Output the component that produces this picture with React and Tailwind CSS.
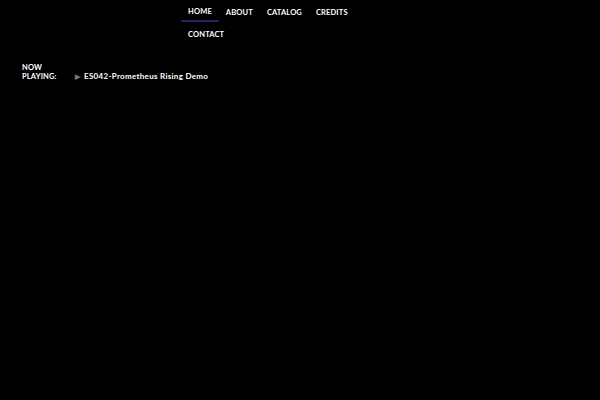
export default function App() {
  const items = ["HOME", "ABOUT", "CATALOG", "CREDITS", "CONTACT"];
  return (
    <div className="w-[600px] h-[400px] bg-black text-white overflow-hidden" style={{ fontFamily: "Lato, 'Liberation Sans', sans-serif" }}>
      <nav className="pl-[181px]">
        <ul className="flex flex-wrap w-[180px]">
          {items.map((t, i) => (
            <li key={t} className={`px-[7px] h-[22px] pt-[4px] flex items-center text-[7.5px] font-bold tracking-[0.02em] leading-none ${i === 0 ? "border-b-2 border-[#24245e]" : ""}`}>
              {t}
            </li>
          ))}
        </ul>
      </nav>
      <div className="flex items-end pl-[22px] pt-[19px]">
        <div className="text-[7.5px] font-bold leading-[9px] w-[53px] tracking-[0.02em]">
          <div>NOW</div>
          <div>PLAYING:</div>
        </div>
        <div className="flex items-center text-[8px] font-bold leading-[9px]">
          <span className="text-[#777] text-[7px] mr-[4px]">&#9654;</span>
          <span className="tracking-[0.3px]">ES042-Prometheus Rising Demo</span>
        </div>
      </div>
    </div>
  );
}
